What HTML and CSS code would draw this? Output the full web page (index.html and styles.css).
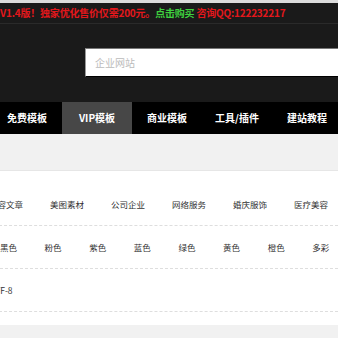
FILE: index.html
```html
<!DOCTYPE html>
<html lang="zh-CN">
<head>
    <meta charset="UTF-8">
    <meta name="viewport" content="width=device-width, initial-scale=1.0">
    <title>企业网站模板</title>
    <link rel="stylesheet" href="styles.css">
</head>
<body>
    <div class="topline"></div>
    <header class="header">
        <div class="notice">
            <span class="red">V1.4版！独家优化售价仅需200元。</span><span class="green">点击购买</span> <span class="red">咨询QQ:122232217</span>
        </div>
        <div class="search-row">
            <input class="search" type="text" placeholder="企业网站">
        </div>
    </header>
    <nav class="nav">
        <a class="nav-item" href="#">免费模板</a>
        <a class="nav-item active" href="#">VIP模板</a>
        <a class="nav-item" href="#">商业模板</a>
        <a class="nav-item" href="#">工具/插件</a>
        <a class="nav-item" href="#">建站教程</a>
    </nav>
    <div class="band"></div>
    <div class="filter">
        <div class="row row-type">
            <span>内容文章</span>
            <span>美图素材</span>
            <span>公司企业</span>
            <span>网络服务</span>
            <span>婚庆服饰</span>
            <span>医疗美容</span>
        </div>
        <div class="row row-color">
            <span>黑色</span>
            <span>粉色</span>
            <span>紫色</span>
            <span>蓝色</span>
            <span>绿色</span>
            <span>黄色</span>
            <span>橙色</span>
            <span>多彩</span>
        </div>
        <div class="row row-code">
            <span>UTF-8</span>
        </div>
    </div>
    <div class="band band-bottom"></div>
</body>
</html>
```

FILE: styles.css
```css
body {
    margin: 0;
    background-color: #fff;
    font-family: "Noto Sans CJK SC", "Noto Sans", sans-serif;
    overflow: hidden;
}
.topline {
    height: 3px;
    background-color: #dcdcdc;
}
.header {
    background-color: #1a1a1a;
}
.notice {
    height: 20px;
    line-height: 20px;
    font-size: 10px;
    font-weight: bold;
    letter-spacing: -0.2px;
    white-space: nowrap;
    border-bottom: 1px solid #2a2a2a;
}
.red {
    color: #e3171c;
}
.green {
    color: #3fd13f;
}
.search-row {
    padding: 24px 0 25px 85px;
}
.search {
    display: block;
    box-sizing: border-box;
    width: 300px;
    height: 29px;
    margin: 0;
    padding: 0 0 0 9px;
    border: 1px solid #000;
    border-top-color: #777;
    border-left-color: #999;
    background-color: #fff;
    font-family: inherit;
    font-size: 10px;
    outline: none;
}
.search::placeholder {
    color: #bbb;
}
.nav {
    display: flex;
    height: 32px;
    margin-left: -8px;
    background-color: #000;
}
.nav-item {
    width: 70px;
    flex-shrink: 0;
    line-height: 32px;
    text-align: center;
    font-size: 10px;
    font-weight: bold;
    color: #fff;
    text-decoration: none;
}
.nav-item.active {
    background-color: #474747;
}
.band {
    height: 36px;
    background-color: #f1f1f1;
    border-bottom: 1px solid #e6e6e6;
}
.filter {
    padding-top: 12px;
}
.row {
    display: flex;
    height: 42px;
    line-height: 42px;
    font-size: 8.5px;
    color: #333;
    white-space: nowrap;
    border-bottom: 1px dashed #dedede;
}
.row span {
    flex-shrink: 0;
}
.row-type {
    margin-left: -11px;
    gap: 27px;
}
.row-color {
    gap: 27.6px;
}
.row-code {
    margin-left: -11px;
}
.band-bottom {
    height: 20px;
    margin-top: 13px;
    border-bottom: none;
}
```
